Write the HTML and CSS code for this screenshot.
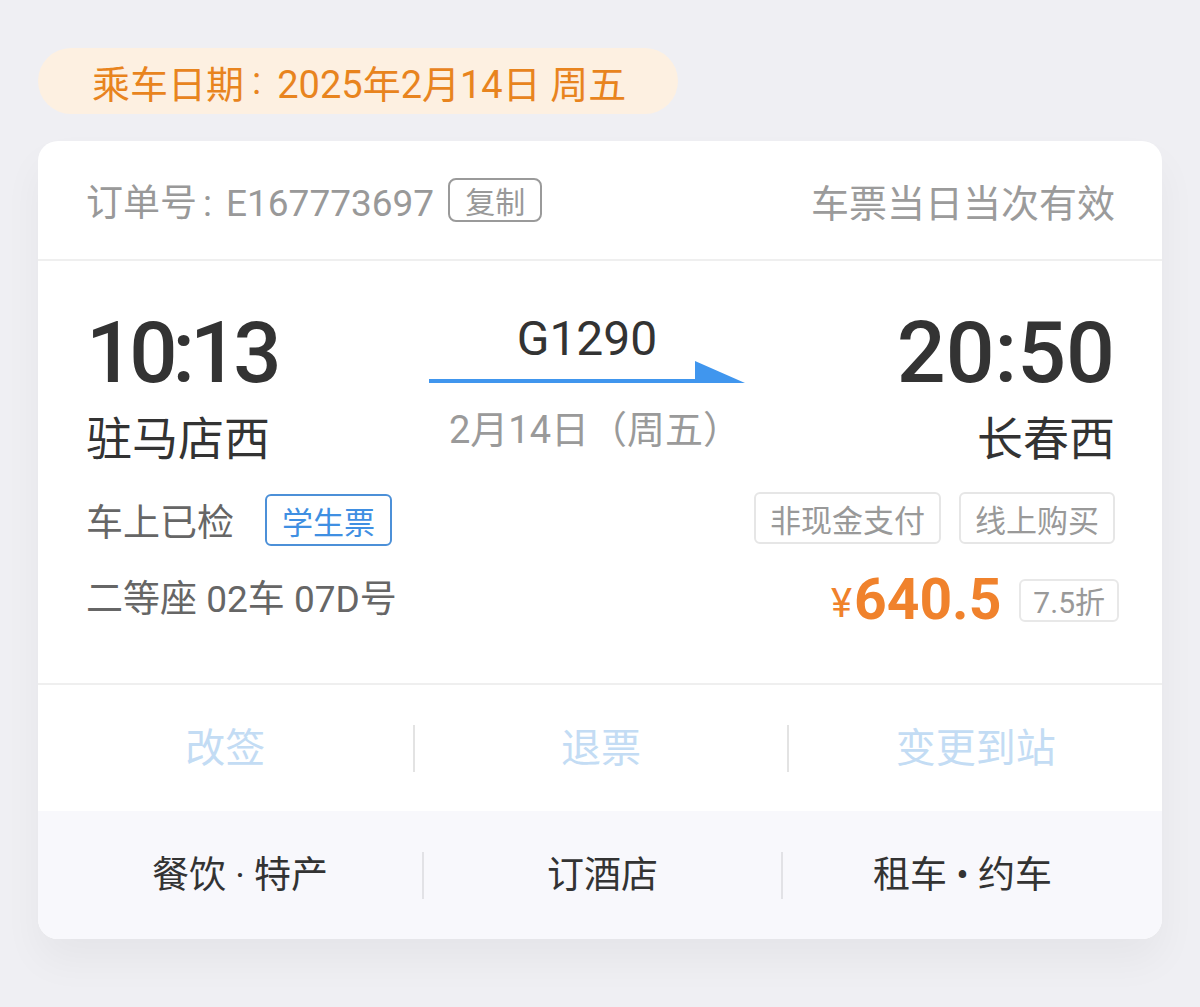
FILE: index.html
```html
<!DOCTYPE html>
<html lang="zh-CN">
<head>
<meta charset="utf-8">
<title>车票</title>
<link rel="stylesheet" href="styles.css">
</head>
<body>
<div class="page">
  <div class="date-pill">乘车日期<span class="colon">:</span>2025年2月14日 周五</div>
  <div class="card">
    <div class="card-head">
      <div class="order">
        <span class="order-text">订单号<span class="colon-sm">:</span>E167773697</span>
        <span class="copy-btn">复制</span>
      </div>
      <div class="valid">车票当日当次有效</div>
    </div>
    <div class="trip">
      <div class="col col-left">
        <div class="time">10:13</div>
        <div class="station">驻马店西</div>
        <div class="status-row">
          <span class="status">车上已检</span>
          <span class="tag-blue">学生票</span>
        </div>
        <div class="seat">二等座 02车 07D号</div>
      </div>
      <div class="col col-mid">
        <div class="train">G1290</div>
        <svg class="arrow" width="316" height="22" viewBox="0 0 316 22"><path d="M0 18 H266 V0 L316 22 H0 Z" fill="#4096ee"/></svg>
        <div class="trip-date">2月14日（周五）</div>
      </div>
      <div class="col col-right">
        <div class="time">20:50</div>
        <div class="station">长春西</div>
        <div class="tags-row">
          <span class="tag-gray">非现金支付</span>
          <span class="tag-gray">线上购买</span>
        </div>
        <div class="price-row">
          <span class="yen">¥</span><span class="price">640.5</span>
          <span class="discount">7.5折</span>
        </div>
      </div>
    </div>
    <div class="actions">
      <div class="action">改签</div>
      <div class="action">退票</div>
      <div class="action">变更到站</div>
    </div>
    <div class="services">
      <div class="service">餐饮 · 特产</div>
      <div class="service">订酒店</div>
      <div class="service">租车 • 约车</div>
    </div>
  </div>
</div>
</body>
</html>
```

FILE: styles.css
```css
* { box-sizing: border-box; margin: 0; padding: 0; }

html, body {
  background: #efeff3;
}

body {
  width: 1200px;
  height: 1007px;
  overflow: hidden;
  font-family: Roboto, "Noto Sans CJK SC", sans-serif;
  color: #333;
}

.page {
  padding: 48px 38px 0 38px;
}

.date-pill {
  display: inline-flex;
  align-items: center;
  height: 66px;
  width: 640px;
  padding-left: 54px;
  border-radius: 33px;
  background: #fdf0e1;
  color: #e8841e;
  font-size: 38px;
  font-weight: 400;
  white-space: nowrap;
}

.colon {
  margin: 0 16px 0 8px;
}

.colon-sm {
  margin: 0 14px 0 6px;
}

.card {
  margin-top: 27px;
  width: 1124px;
  background: #fff;
  border-radius: 20px;
  overflow: hidden;
  box-shadow: 0 22px 40px rgba(0, 0, 0, 0.045);
}

.card-head {
  height: 120px;
  display: flex;
  align-items: center;
  justify-content: space-between;
  padding: 0 47px 0 48px;
  border-bottom: 2px solid #efefef;
  color: #999;
  font-size: 37px;
}

.order {
  display: flex;
  align-items: center;
}

.copy-btn {
  margin-left: 14px;
  height: 44px;
  padding: 0 15px;
  display: inline-flex;
  align-items: center;
  border: 2px solid #9a9a9a;
  border-radius: 8px;
  font-size: 30px;
  color: #999;
}

.valid {
  font-size: 38px;
  color: #9b9b9b;
}

.trip {
  display: grid;
  grid-template-columns: 343px 316px 1fr;
  padding: 52px 47px 58px 48px;
  border-bottom: 2px solid #efefef;
}

.col {
  display: flex;
  flex-direction: column;
}

.col-right {
  align-items: flex-end;
}

.col-mid {
  align-items: center;
  padding-top: 4px;
}

.time {
  font-size: 85px;
  line-height: 80px;
  font-weight: 500;
  letter-spacing: -3px;
  color: #333;
}

.col-left .time {
  letter-spacing: -5px;
}

.col-right .time {
  letter-spacing: 0;
  font-size: 86px;
}

.station {
  margin-top: 18px;
  font-size: 46px;
  line-height: 56px;
  color: #333;
}

.status-row {
  margin-top: 27px;
  height: 52px;
  display: flex;
  align-items: center;
}

.status {
  font-size: 37px;
  color: #666;
}

.tag-blue {
  margin-left: 31px;
  height: 52px;
  padding: 0 15px;
  display: inline-flex;
  align-items: center;
  border: 2px solid #4c90d8;
  border-radius: 6px;
  color: #3f8fe2;
  font-size: 31px;
}

.seat {
  margin-top: 29px;
  font-size: 37px;
  line-height: 50px;
  color: #666;
}

.train {
  font-size: 48px;
  line-height: 44px;
  color: #333;
}

.arrow {
  display: block;
}

.trip-date {
  margin-top: 25px;
  margin-left: 16px;
  font-size: 38px;
  line-height: 44px;
  color: #9a9a9a;
}

.tags-row {
  margin-top: 25px;
  display: flex;
  gap: 18px;
}

.tag-gray {
  height: 52px;
  padding: 0 14px;
  display: inline-flex;
  align-items: center;
  border: 2px solid #e6e6e6;
  border-radius: 6px;
  color: #999;
  font-size: 31px;
}

.price-row {
  margin-top: 31px;
  height: 50px;
  display: flex;
  align-items: center;
  margin-right: -4px;
}

.price {
  color: #f0822c;
  font-size: 57px;
  font-weight: 700;
  line-height: 50px;
}

.yen {
  color: #f0822c;
  font-size: 40px;
  line-height: 50px;
  margin-right: 2px;
  padding-top: 8px;
}

.discount {
  margin-left: 18px;
  height: 43px;
  padding: 0 12px;
  display: inline-flex;
  align-items: center;
  border: 2px solid #e8e8e8;
  border-radius: 6px;
  color: #999;
  font-size: 30px;
}

.actions {
  height: 126px;
  display: grid;
  grid-template-columns: 1fr 1fr 1fr;
  align-items: center;
}

.action {
  text-align: center;
  font-size: 40px;
  color: #c3dcf4;
  line-height: 47px;
  border-left: 2px solid #e3e3e3;
}

.action:first-child {
  border-left: none;
}

.services {
  height: 128px;
  background: #f8f8fc;
  display: grid;
  grid-template-columns: 384fr 359fr 381fr;
  align-items: center;
}

.service {
  text-align: center;
  font-size: 37px;
  color: #333;
  line-height: 47px;
  border-left: 2px solid #e2e2e6;
}

.service:first-child {
  border-left: none;
  padding-left: 20px;
}

.service:last-child {
  padding-right: 20px;
}
```
